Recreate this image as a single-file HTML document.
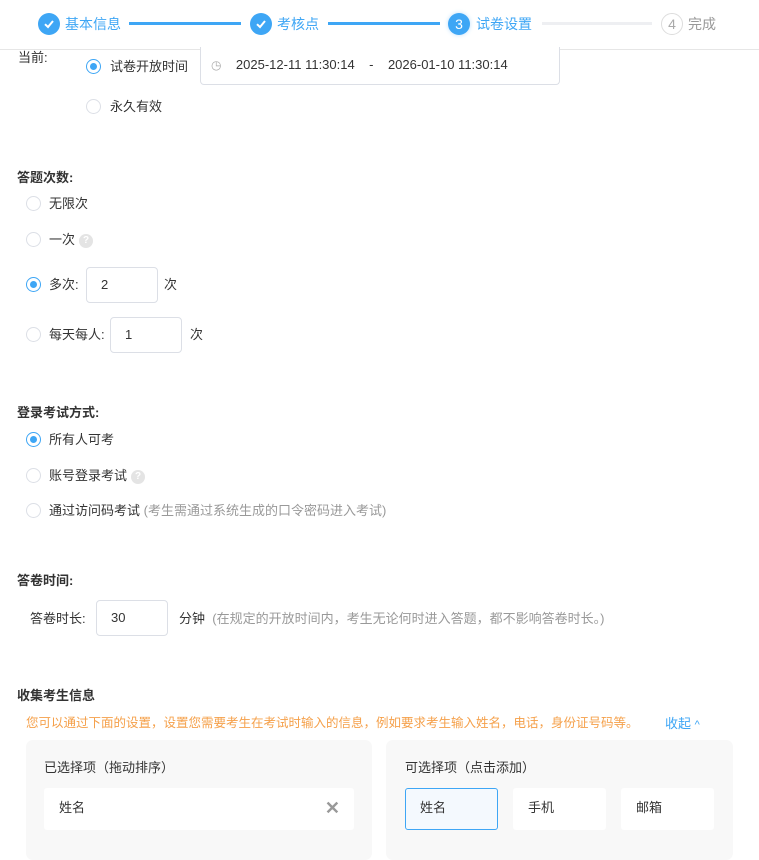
<!DOCTYPE html>
<html><head><meta charset="utf-8"><style>
*{margin:0;padding:0;box-sizing:border-box}
body{width:759px;height:845px;background:#fff;font-family:"Liberation Sans","Noto Sans CJK SC",sans-serif;font-size:13px;color:#333;position:relative;overflow:hidden}
.a{position:absolute;white-space:nowrap;line-height:15px}
.hdr{position:absolute;left:0;top:0;width:759px;height:50px;border-bottom:1px solid #e6e6e6;background:#fff}
.ci{position:absolute;width:22px;height:22px;border-radius:50%;background:#3ea6f5;top:13px;color:#fff;text-align:center;line-height:22px;font-size:14px}
.ci svg{position:absolute;left:5px;top:5px}
.st{position:absolute;top:16px;font-size:14px;line-height:17px;color:#3ea6f5}
.ln{position:absolute;top:22px;height:3px;background:#3ea6f5}
.r{position:absolute;width:15px;height:15px;border-radius:50%;border:1px solid #dcdfe6;background:#fff}
.r.on{border-color:#3ea6f5}
.r.on::after{content:"";position:absolute;left:3px;top:3px;width:7px;height:7px;border-radius:50%;background:#3ea6f5}
.in{position:absolute;border:1px solid #dcdfe6;border-radius:4px;background:#fff;padding-left:14px;color:#333}
.b{font-weight:bold}
.q{display:inline-block;width:14px;height:14px;border-radius:50%;background:#e4e4e4;color:#fff;font-size:10px;text-align:center;line-height:14px;vertical-align:middle;margin-left:4px;font-weight:bold}
.g{color:#999}
.pn{position:absolute;top:740px;height:120px;background:#f8f8f8;border-radius:7px}
.it{position:absolute;top:788px;height:42px;background:#fff;border-radius:3px;line-height:42px;padding-left:15px}
</style></head><body>
<div class="hdr">
<div class="ci" style="left:38px"><svg width="12" height="12" viewBox="0 0 12 12"><path d="M2 6.2 L5 9 L10 3" stroke="#fff" stroke-width="2" fill="none"/></svg></div><div class="st" style="left:65px">基本信息</div>
<div class="ln" style="left:129px;width:112px"></div>
<div class="ci" style="left:250px"><svg width="12" height="12" viewBox="0 0 12 12"><path d="M2 6.2 L5 9 L10 3" stroke="#fff" stroke-width="2" fill="none"/></svg></div><div class="st" style="left:277px">考核点</div>
<div class="ln" style="left:328px;width:112px"></div>
<div class="ci" style="left:448px;box-shadow:0 0 5px #bfe0fb">3</div><div class="st" style="left:476px">试卷设置</div>
<div class="ln" style="left:542px;width:110px;background:#eeeff2"></div>
<div class="ci" style="left:661px;background:#fff;border:1px solid #ddd;color:#aaa;line-height:20px">4</div><div class="st" style="left:688px;color:#999">完成</div>
</div>

<div class="a" style="left:18px;top:50px">当前:</div>
<div class="r on" style="left:86px;top:59px"></div><div class="a" style="left:110px;top:59px">试卷开放时间</div>
<div class="in" style="left:200px;top:47px;width:360px;height:38px;border-top:none;border-radius:0 0 4px 4px;line-height:36px;padding-left:10px"><span style="color:#aaa;font-size:12px">◷</span>&nbsp;&nbsp;&nbsp;&nbsp;2025-12-11 11:30:14 &nbsp;&nbsp;&nbsp;- &nbsp;&nbsp;&nbsp;2026-01-10 11:30:14</div>
<div class="r" style="left:86px;top:99px"></div><div class="a" style="left:110px;top:99px">永久有效</div>

<div class="a b" style="left:17px;top:170px">答题次数:</div>
<div class="r" style="left:26px;top:196px"></div><div class="a" style="left:49px;top:196px">无限次</div>
<div class="r" style="left:26px;top:232px"></div><div class="a" style="left:49px;top:232px">一次<span class="q">?</span></div>
<div class="r on" style="left:26px;top:277px"></div><div class="a" style="left:49px;top:277px">多次:</div>
<div class="in" style="left:86px;top:267px;width:72px;height:36px;line-height:34px">2</div><div class="a" style="left:164px;top:277px">次</div>
<div class="r" style="left:26px;top:327px"></div><div class="a" style="left:49px;top:327px">每天每人:</div>
<div class="in" style="left:110px;top:317px;width:72px;height:36px;line-height:34px">1</div><div class="a" style="left:190px;top:327px">次</div>

<div class="a b" style="left:17px;top:405px">登录考试方式:</div>
<div class="r on" style="left:26px;top:432px"></div><div class="a" style="left:49px;top:432px">所有人可考</div>
<div class="r" style="left:26px;top:468px"></div><div class="a" style="left:49px;top:468px">账号登录考试<span class="q">?</span></div>
<div class="r" style="left:26px;top:503px"></div><div class="a" style="left:49px;top:503px">通过访问码考试 <span class="g">(考生需通过系统生成的口令密码进入考试)</span></div>

<div class="a b" style="left:17px;top:573px">答卷时间:</div>
<div class="a" style="left:30px;top:611px">答卷时长:</div>
<div class="in" style="left:96px;top:600px;width:72px;height:36px;line-height:34px">30</div>
<div class="a" style="left:179px;top:611px">分钟 &nbsp;<span class="g">(在规定的开放时间内，考生无论何时进入答题，都不影响答卷时长。)</span></div>

<div class="a b" style="left:17px;top:688px">收集考生信息</div>
<div class="a" style="left:26px;top:716px;color:#f5a04a;font-size:12.5px">您可以通过下面的设置，设置您需要考生在考试时输入的信息，例如要求考生输入姓名，电话，身份证号码等。</div>
<div class="a" style="left:665px;top:716px;color:#3ea6f5">收起 <span style="font-size:11px">^</span></div>

<div class="pn" style="left:26px;width:346px"></div>
<div class="pn" style="left:386px;width:347px"></div>
<div class="a" style="left:44px;top:760px">已选择项（拖动排序）</div>
<div class="a" style="left:405px;top:760px">可选择项（点击添加）</div>
<div class="it" style="left:44px;width:310px;line-height:40px">姓名<span style="position:absolute;right:14px;color:#999;font-size:18px;font-weight:bold">✕</span></div>
<div class="it" style="left:405px;width:93px;background:#f4f9fe;border:1px solid #3ea6f5;line-height:38px;padding-left:14px">姓名</div>
<div class="it" style="left:513px;width:93px;line-height:40px">手机</div>
<div class="it" style="left:621px;width:93px;line-height:40px">邮箱</div>
</body></html>
